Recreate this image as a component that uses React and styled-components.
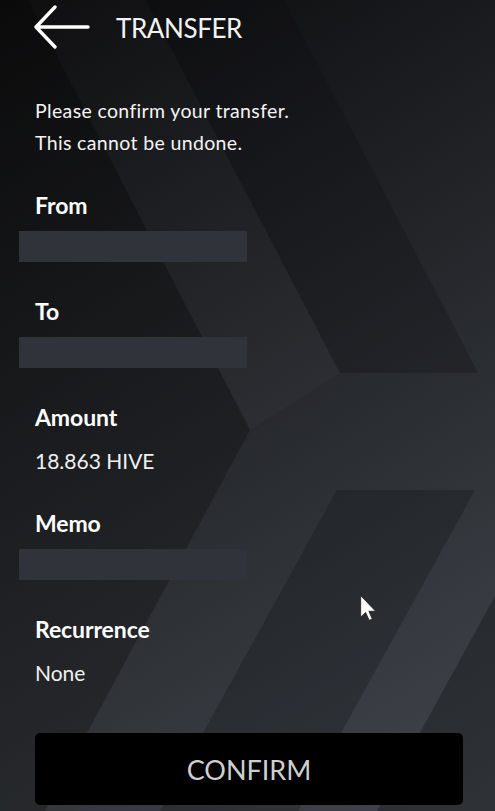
import React from 'react'
import styled, { createGlobalStyle } from 'styled-components'

const GlobalStyle = createGlobalStyle`
    html, body {
        margin     : 0;
        padding    : 0;
        background : #0b0b0c;
    }
    #root {
        width    : 495px;
        height   : 811px;
        overflow : hidden;
    }
`

const fields = [
    { label: 'From', hidden: true },
    { label: 'To', hidden: true },
    { label: 'Amount', value: '18.863 HIVE' },
    { label: 'Memo', hidden: true },
    { label: 'Recurrence', value: 'None' }
]

const Backdrop = () => (
    <BackdropSvg viewBox="0 0 495 811" preserveAspectRatio="none">
        <defs>
            <linearGradient id="base" x1="0" y1="0" x2="495" y2="811" gradientUnits="userSpaceOnUse">
                <stop offset="0" stopColor="#0a0a0b" />
                <stop offset="0.45" stopColor="#232529" />
                <stop offset="1" stopColor="#42464c" />
            </linearGradient>
        </defs>
        <rect x="0" y="0" width="495" height="811" fill="url(#base)" />
        {/* upper light band */}
        <polygon points="28,0 146,0 340,373 250,430" fill="#ffffff" opacity="0.02" />
        {/* upper dark slab */}
        <polygon points="146,0 284,0 478,373 340,373" fill="#0b0c0e" opacity="0.25" />
        {/* left chevron */}
        <polygon points="0,0 28,0 250,430 45,811 0,811" fill="#0b0c0d" opacity="0.32" />
        {/* lower dark slab */}
        <polygon points="337,490 475,490 298,811 160,811" fill="#121417" opacity="0.3" />
        {/* corner */}
        <polygon points="495,596 495,811 377,811" fill="#121417" opacity="0.4" />
    </BackdropSvg>
)

const BackArrow = () => (
    <svg width="56" height="46" viewBox="0 0 56 46">
        <path d="M21 3 L2 23 L21 43 M2 23 L54 23" fill="none" stroke="#ffffff" strokeWidth="3.4" strokeLinecap="round" strokeLinejoin="round" />
    </svg>
)

const App = () => {
    return (
        <>
            <GlobalStyle />
            <Screen>
                <Backdrop />
                <Content>
                    <Header>
                        <BackArrow />
                        <Title>TRANSFER</Title>
                    </Header>
                    <Intro>
                        Please confirm your transfer.<br />
                        This cannot be undone.
                    </Intro>
                    <FieldList>
                        {fields.map(field => (
                            <Field key={field.label}>
                                <Label>{field.label}</Label>
                                {field.hidden ? <Redacted /> : <Value>{field.value}</Value>}
                            </Field>
                        ))}
                    </FieldList>
                    <ConfirmButton>CONFIRM</ConfirmButton>
                </Content>
                <Cursor width="17" height="26" viewBox="0 0 13 20">
                    <path d="M0.5 0.5 L0.5 17 L4.3 13.4 L7 19.5 L9.4 18.5 L6.8 12.5 L12 12.5 Z" fill="#ffffff" stroke="#1b1c1f" strokeWidth="0.6" />
                </Cursor>
            </Screen>
        </>
    )
}

export default App

const Screen = styled.div`
    position    : relative;
    width       : 495px;
    height      : 811px;
    overflow    : hidden;
    font-family : Lato, "Open Sans", sans-serif;
    color       : #ffffff;
`

const BackdropSvg = styled.svg`
    position : absolute;
    inset    : 0;
    width    : 100%;
    height   : 100%;
`

const Content = styled.div`
    position       : relative;
    display        : flex;
    flex-direction : column;
    padding        : 0 32px 0 35px;
`

const Header = styled.div`
    display     : flex;
    align-items : center;
    gap         : 26px;
    height      : 54px;
    margin-left : -1px;
`

const Title = styled.div`
    font-size      : 26px;
    font-weight    : 400;
    letter-spacing : -0.4px;
    line-height    : 1;
    padding-top    : 2px;
    color          : #f2f2f2;
`

const Intro = styled.div`
    margin-top     : 41px;
    font-size      : 19.5px;
    line-height    : 32px;
    letter-spacing : 0.35px;
    color          : #f4f4f4;
`

const FieldList = styled.div`
    display        : flex;
    flex-direction : column;
    margin-top     : 33px;
`

const Field = styled.div`
    display        : flex;
    flex-direction : column;
    align-items    : flex-start;
    height         : 106px;
`

const Label = styled.div`
    font-size      : 23px;
    font-weight    : 700;
    line-height    : 26px;
    letter-spacing : -0.1px;
    color          : #ffffff;
`

const Redacted = styled.div`
    margin-top  : 13px;
    margin-left : -16px;
    width       : 228px;
    height      : 31px;
    background  : #30343a;
`

const Value = styled.div`
    margin-top  : 20px;
    font-size   : 21px;
    line-height : 22px;
    color       : #f0f0f0;
`

const ConfirmButton = styled.button`
    margin-top    : 11px;
    width         : 428px;
    height        : 72px;
    border        : none;
    border-radius : 5px;
    background    : #000000;
    color         : #cfcfcf;
    font-family   : Lato, "Open Sans", sans-serif;
    font-size     : 27px;
    font-weight   : 400;
    cursor        : pointer;
`

const Cursor = styled.svg`
    position : absolute;
    left     : 360px;
    top      : 595px;
`
